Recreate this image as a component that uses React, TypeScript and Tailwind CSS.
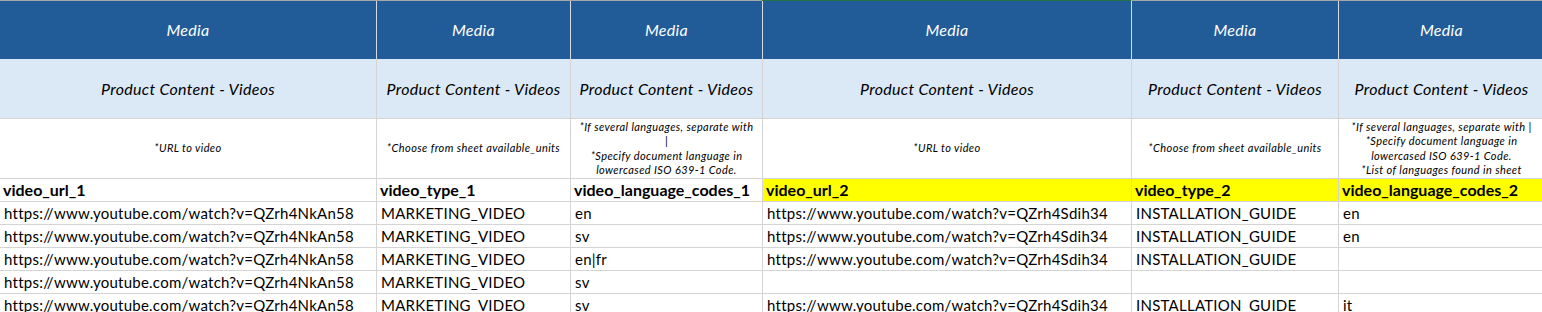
import React from 'react';

const URL1 = 'https://www.youtube.com/watch?v=QZrh4NkAn58';
const URL2 = 'https://www.youtube.com/watch?v=QZrh4Sdih34';

const notes: string[][] = [
  ['*URL to video'],
  ['*Choose from sheet available_units'],
  ['*If several languages, separate with', '|', '*Specify document language in', 'lowercased ISO 639-1 Code.'],
  ['*URL to video'],
  ['*Choose from sheet available_units'],
  [
    '*If several languages, separate with |',
    '*Specify document language in',
    'lowercased ISO 639-1 Code.',
    '*List of languages found in sheet',
  ],
];

const fields = [
  'video_url_1',
  'video_type_1',
  'video_language_codes_1',
  'video_url_2',
  'video_type_2',
  'video_language_codes_2',
];

const rows: string[][] = [
  [URL1, 'MARKETING_VIDEO', 'en', URL2, 'INSTALLATION_GUIDE', 'en'],
  [URL1, 'MARKETING_VIDEO', 'sv', URL2, 'INSTALLATION_GUIDE', 'en'],
  [URL1, 'MARKETING_VIDEO', 'en|fr', URL2, 'INSTALLATION_GUIDE', ''],
  [URL1, 'MARKETING_VIDEO', 'sv', '', '', ''],
  [URL1, 'MARKETING_VIDEO', 'sv', URL2, 'INSTALLATION_GUIDE', 'it'],
];

const cols = [0, 1, 2, 3, 4, 5];

export default function App() {
  return (
    <div
      className="w-[1542px] h-[312px] overflow-hidden bg-white text-black"
      style={{ fontFamily: 'Lato, "Open Sans", sans-serif' }}
    >
      {/* column header strip edge */}
      <div className="flex h-px">
        <div className="w-[762px] bg-[#a6a6a6]" />
        <div className="w-[369px] bg-[#217346]" />
        <div className="flex-1 bg-[#a6a6a6]" />
      </div>

      <div className="grid grid-cols-[377px_194px_192px_369px_207px_206px] w-[1545px]">
        {/* group row */}
        {cols.map((i) => (
          <div
            key={'m' + i}
            className="h-[58px] bg-[#215b98] border-r border-[#d6dbe2] flex items-center justify-center text-white italic text-[16px] tracking-[0.3px]"
          >
            Media
          </div>
        ))}

        {/* section row */}
        {cols.map((i) => (
          <div
            key={'p' + i}
            className="h-[60px] bg-[#dbe8f6] border-r border-b border-[#d4d4d4] flex items-center justify-center italic text-[16px] tracking-[0.3px]"
          >
            Product Content - Videos
          </div>
        ))}

        {/* notes row */}
        {notes.map((lines, i) => (
          <div
            key={'n' + i}
            className="h-[60px] border-r border-b border-[#d4d4d4] flex flex-col items-center justify-center italic text-[11px] tracking-[0.4px] leading-[14.5px] text-center"
          >
            {lines.map((l, j) => (
              <span key={j} className="whitespace-nowrap">
                {l}
              </span>
            ))}
          </div>
        ))}

        {/* field names */}
        {fields.map((f, i) => (
          <div
            key={'f' + i}
            className={
              'h-[23px] border-r border-b border-[#d4d4d4] flex items-end pl-[3px] pb-[2px] font-bold text-[16px] leading-[18px] whitespace-nowrap overflow-hidden ' +
              (i >= 3 ? 'bg-[#ffff00]' : 'bg-white')
            }
          >
            {f}
          </div>
        ))}

        {/* data */}
        {rows.map((r, ri) =>
          r.map((c, ci) => (
            <div
              key={ri + '-' + ci}
              className="h-[23px] border-r border-b border-[#d4d4d4] flex items-end pl-[4px] pb-[2px] text-[15px] tracking-[0.25px] leading-[18px] whitespace-nowrap overflow-hidden"
            >
              {c}
            </div>
          ))
        )}
      </div>
    </div>
  );
}
